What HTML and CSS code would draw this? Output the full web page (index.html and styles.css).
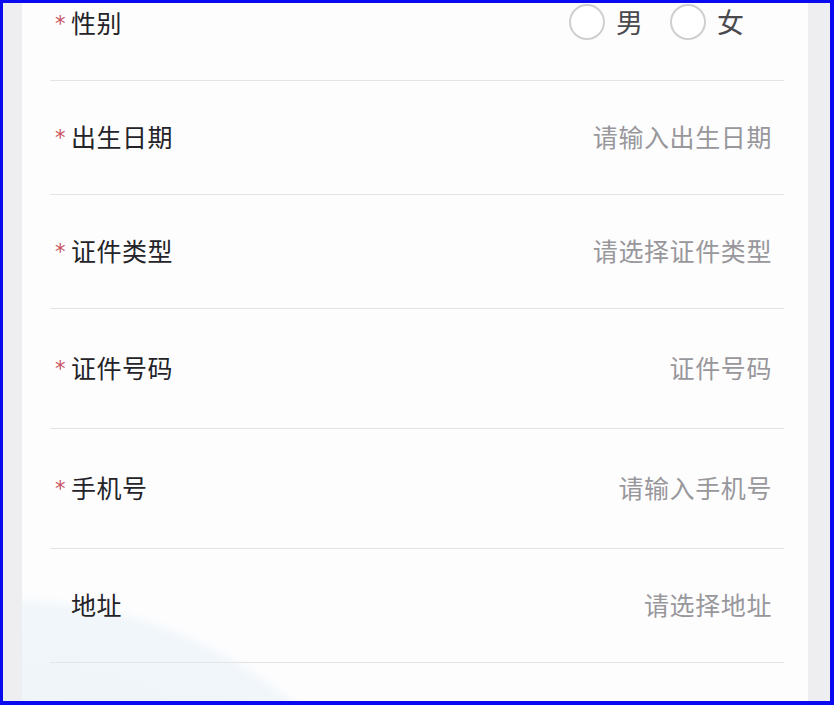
FILE: index.html
```html
<!DOCTYPE html>
<html lang="zh-CN">
<head>
<meta charset="utf-8">
<title>表单</title>
<link rel="stylesheet" href="styles.css">
</head>
<body>
<div class="frame">
  <div class="side side-left"></div>
  <div class="card">
    <div class="list">
      <div class="row row-first">
        <div class="label"><span class="req">*</span>性别</div>
        <div class="radios">
          <label class="radio"><span class="circle"></span><span class="rtext">男</span></label>
          <label class="radio"><span class="circle"></span><span class="rtext">女</span></label>
        </div>
      </div>
      <div class="row">
        <div class="label"><span class="req">*</span>出生日期</div>
        <div class="ph">请输入出生日期</div>
      </div>
      <div class="row">
        <div class="label"><span class="req">*</span>证件类型</div>
        <div class="ph">请选择证件类型</div>
      </div>
      <div class="row row-tall">
        <div class="label"><span class="req">*</span>证件号码</div>
        <div class="ph">证件号码</div>
      </div>
      <div class="row row-tall">
        <div class="label"><span class="req">*</span>手机号</div>
        <div class="ph">请输入手机号</div>
      </div>
      <div class="row">
        <div class="label"><span class="req req-empty"></span>地址</div>
        <div class="ph">请选择地址</div>
      </div>
    </div>
  </div>
  <div class="side side-right"></div>
</div>
</body>
</html>
```

FILE: styles.css
```css
html, body {
  margin: 0;
  padding: 0;
  background: #ffffff;
}

.frame {
  box-sizing: border-box;
  width: 834px;
  height: 705px;
  border-style: solid;
  border-color: #0a0af0;
  border-width: 3px 4px 4px 3px;
  display: flex;
  overflow: hidden;
  font-family: "Noto Sans CJK SC", "Noto Sans", sans-serif;
}

.side {
  flex: none;
  background: #eeedf0;
}

.side-left {
  width: 19px;
}

.side-right {
  width: 22px;
}

.card {
  flex: 1;
  padding: 0 24px 0 28px;
  background:
    radial-gradient(circle 445px at -10px 1036px, #eaf2f8 0, #f1f6fa 97%, rgba(241,246,250,0) 100%),
    #fdfdfe;
  overflow: hidden;
}

.list {
  margin-top: -36px;
}

.row {
  box-sizing: border-box;
  height: 114px;
  border-bottom: 1px solid #e4e3e6;
  display: flex;
  align-items: center;
  justify-content: space-between;
  padding: 0 12px 4px 4px;
}

.row-tall {
  height: 120px;
}

.label {
  display: flex;
  align-items: center;
  font-size: 25px;
  color: #242428;
  letter-spacing: 0.5px;
}

.req {
  display: inline-block;
  width: 17px;
  color: #c9505a;
  font-size: 21px;
  font-family: "DejaVu Sans", sans-serif;
  line-height: 1;
  position: relative;
  top: 3px;
  left: 1px;
}

.ph {
  font-size: 25px;
  color: #98979b;
  letter-spacing: 0.6px;
}

.radios {
  display: flex;
  align-items: center;
  gap: 27px;
  margin-right: 28px;
}

.radio {
  display: flex;
  align-items: center;
  gap: 11px;
}

.circle {
  box-sizing: border-box;
  width: 36px;
  height: 36px;
  border: 2px solid #cfcfd2;
  border-radius: 50%;
  background: #ffffff;
}

.rtext {
  font-size: 27px;
  color: #4a4a4e;
}
```
